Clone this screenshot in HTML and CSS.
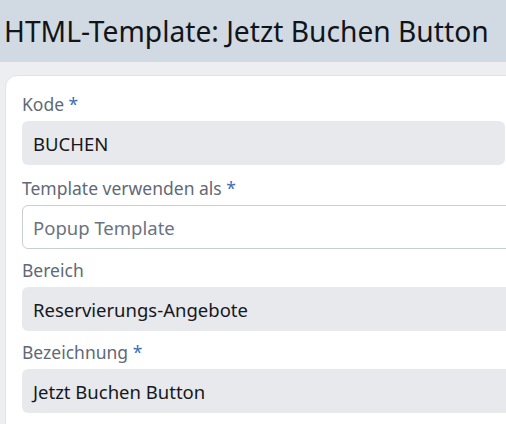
FILE: index.html
```html
<!DOCTYPE html>
<html lang="de">
<head>
<meta charset="utf-8">
<title>HTML-Template: Jetzt Buchen Button</title>
<link rel="stylesheet" href="styles.css">
</head>
<body>
<header class="page-header">
  <h1 class="page-title">HTML-Template: Jetzt Buchen Button</h1>
</header>
<main class="page-body">
  <section class="card">
    <div class="field field-first">
      <label class="field-label">Kode <span class="req">*</span></label>
      <div class="input input-filled input-short">BUCHEN</div>
    </div>
    <div class="field">
      <label class="field-label">Template verwenden als <span class="req">*</span></label>
      <div class="input input-select">Popup Template</div>
    </div>
    <div class="field">
      <label class="field-label">Bereich</label>
      <div class="input input-filled">Reservierungs-Angebote</div>
    </div>
    <div class="field">
      <label class="field-label">Bezeichnung <span class="req">*</span></label>
      <div class="input input-filled">Jetzt Buchen Button</div>
    </div>
  </section>
</main>
</body>
</html>
```
FILE: styles.css
```css
html, body {
  margin: 0;
  padding: 0;
}
body {
  width: 506px;
  height: 424px;
  overflow: hidden;
  background: #eceef1;
  font-family: "Noto Sans", "Open Sans", sans-serif;
}
.page-header {
  height: 62px;
  background: #d1d9e3;
  display: flex;
  align-items: center;
  padding-left: 4px;
}
.page-title {
  margin: 0;
  font-weight: 400;
  font-size: 28.2px;
  color: #111418;
  white-space: nowrap;
}
.page-body {
  padding: 13px 0 0 5px;
}
.card {
  width: 640px;
  background: #ffffff;
  border: 1px solid #dfe2e7;
  border-radius: 12px 0 0 0;
  padding: 18px 0 20px 16px;
  display: flex;
  flex-direction: column;
  gap: 11px;
}
.field {
  display: flex;
  flex-direction: column;
  gap: 7px;
}
.field-first {
  margin-bottom: 2px;
}
.field-label {
  font-size: 17.5px;
  line-height: 20px;
  color: #5f6977;
  white-space: nowrap;
}
.req {
  color: #3d6fb3;
}
.input {
  box-sizing: border-box;
  height: 44px;
  border-radius: 6px;
  padding: 0 11px;
  display: flex;
  align-items: center;
  font-size: 18.5px;
  color: #15181c;
  white-space: nowrap;
}
.input-filled {
  background: #e8e9ed;
}
.input-short {
  width: 483px;
}
.input-select {
  background: #ffffff;
  border: 1px solid #c9cdd4;
  padding-left: 10px;
  color: #6b7380;
}
```
